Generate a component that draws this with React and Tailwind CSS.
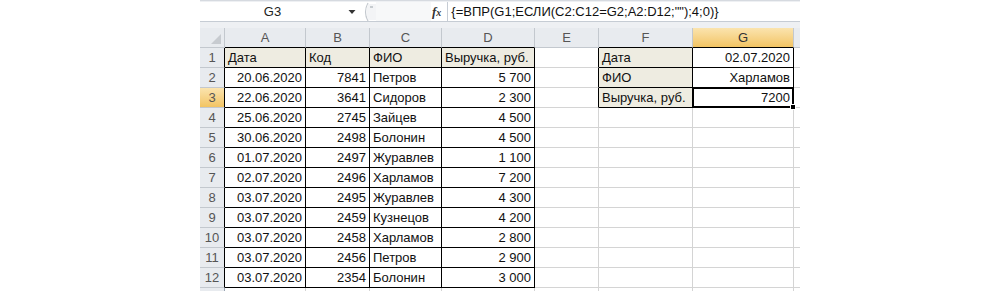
import React from 'react';

const cols = [
  { key: 'A', w: 'w-[81px]' },
  { key: 'B', w: 'w-[64px]' },
  { key: 'C', w: 'w-[72px]' },
  { key: 'D', w: 'w-[93px]' },
  { key: 'E', w: 'w-[64px]' },
  { key: 'F', w: 'w-[94px]' },
  { key: 'G', w: 'w-[101px]' },
];

const data = [
  ['20.06.2020', '7841', 'Петров', '5 700'],
  ['22.06.2020', '3641', 'Сидоров', '2 300'],
  ['25.06.2020', '2745', 'Зайцев', '4 500'],
  ['30.06.2020', '2498', 'Болонин', '4 500'],
  ['01.07.2020', '2497', 'Журавлев', '1 100'],
  ['02.07.2020', '2496', 'Харламов', '7 200'],
  ['03.07.2020', '2495', 'Журавлев', '4 300'],
  ['03.07.2020', '2459', 'Кузнецов', '4 200'],
  ['03.07.2020', '2458', 'Харламов', '2 800'],
  ['03.07.2020', '2456', 'Петров', '2 900'],
  ['03.07.2020', '2354', 'Болонин', '3 000'],
];

const lookup = [
  ['Дата', '02.07.2020'],
  ['ФИО', 'Харламов'],
  ['Выручка, руб.', '7200'],
];

// what goes in each cell: [text, align, beige]
const cellFor = (r, c) => {
  if (r === 1 && c < 4) return [['Дата', 'Код', 'ФИО', 'Выручка, руб.'][c], 'left', true];
  if (r >= 2 && r <= 12 && c < 4) return [data[r - 2][c], c === 2 ? 'left' : 'right', false];
  if (r <= 3 && c === 5) return [lookup[r - 1][0], 'left', true];
  if (r <= 3 && c === 6) return [lookup[r - 1][1], 'right', false];
  return ['', 'left', false];
};

const inTable = (r, c) => (c < 4 && r <= 12) || (c >= 5 && r <= 3);

const Cell = ({ r, c }) => {
  const [text, align, beige] = cellFor(r, c);
  const right = inTable(r, c) || (c === 4 && r <= 3) ? 'border-r-black' : 'border-r-[#d4d4d4]';
  const bottom = inTable(r, c) ? 'border-b-black' : 'border-b-[#d4d4d4]';
  const selected = r === 3 && c === 6;
  return (
    <div
      className={`${cols[c].w} h-full shrink-0 border-r border-b ${right} ${bottom} ${beige ? 'bg-[#eeece1]' : 'bg-white'} relative ${selected ? 'z-10' : ''} flex items-center px-[3px] text-[#111] ${align === 'right' ? 'justify-end' : 'justify-start'}`}
    >
      <span className="whitespace-nowrap leading-none">{text}</span>
      {selected && (
        <>
          <div className="absolute -left-[1px] -top-[1px] -right-[1px] -bottom-[1px] border-2 border-black" />
          <div className="absolute -right-[3px] -bottom-[3px] w-[6px] h-[6px] bg-black border border-white" />
        </>
      )}
    </div>
  );
};

const RowHead = ({ n, active }) => (
  <div
    className={`w-[25px] h-full shrink-0 border-b border-r ${n >= 1 && n <= 12 ? 'border-r-black' : 'border-r-[#9aa5b3]'} border-b-[#c3c8ce] flex items-center justify-center text-[#555] ${active ? 'bg-gradient-to-b from-[#fbe4ae] to-[#f2c462]' : 'bg-[#e8ebef]'}`}
  >
    {n <= 12 ? n : ''}
  </div>
);

export default function App() {
  return (
    <div className="w-[1000px] h-[291px] bg-white overflow-hidden" style={{ fontFamily: '"Liberation Sans", Arial, sans-serif' }}>
      <div className="ml-[200px] w-[600px] h-[291px] overflow-hidden text-[13px]">
        {/* formula bar */}
        <div className="h-[28px] bg-[#eef0f3] border-t border-[#d6dae0] pt-[1px]">
          <div className="h-[20px] bg-white border-b border-[#c6ccd4] flex items-center">
            <div className="w-[145px] flex justify-center text-[#222]">G3</div>
            <svg width="10" height="6" viewBox="0 0 10 6" className="ml-[2px]">
              <path d="M1.5 1 L8.5 1 L5 5 Z" fill="#333" />
            </svg>
            <svg width="14" height="20" viewBox="0 0 14 20" className="ml-[5px]">
              <path d="M6 1 Q1 10 6 19" stroke="#c4c9cf" strokeWidth="1.2" fill="none" />
              <path d="M6 2 Q3 10 6 18 L14 18 L14 2 Z" fill="#f3f4f6" />
              <path d="M8 5 L11 5" stroke="#aab0b8" strokeWidth="1.2" />
            </svg>
            <div className="w-[55px] h-full bg-[#f7f8f9]" />
            <span className="text-[13px] italic font-bold text-[#333] ml-[1px]" style={{ fontFamily: '"Liberation Serif", serif' }}>
              f<span className="text-[10px]">x</span>
            </span>
            <div className="w-px h-full bg-[#c6ccd4] ml-[6px]" />
            <span className="ml-[3px] text-[#111] whitespace-nowrap">{'{=ВПР(G1;ЕСЛИ(C2:C12=G2;A2:D12;"");4;0)}'}</span>
          </div>
        </div>

        {/* column headers */}
        <div className="flex h-[20px]">
          <div className="w-[25px] h-full shrink-0 bg-[#e8ebef] border-r border-b border-[#c3c8ce] relative">
            <svg width="10" height="10" viewBox="0 0 10 10" className="absolute right-[3px] bottom-[3px]">
              <path d="M10 0 L10 10 L0 10 Z" fill="#c7cbd0" />
            </svg>
          </div>
          {cols.map((col, c) => (
            <div
              key={col.key}
              className={`${col.w} h-full shrink-0 border-r border-b border-r-[#c3c8ce] ${c === 4 ? 'border-b-[#c3c8ce]' : 'border-b-black'} flex items-center justify-center ${c === 6 ? 'bg-gradient-to-b from-[#fbe4ae] to-[#f2c462] text-[#333]' : 'bg-[#e8ebef] text-[#555]'}`}
            >
              {col.key}
            </div>
          ))}
          <div className="flex-1 h-full bg-[#e8ebef] border-b border-[#c3c8ce]" />
        </div>

        {/* rows */}
        {Array.from({ length: 13 }, (_, i) => i + 1).map((r) => (
          <div key={r} className="flex h-[20px]">
            <RowHead n={r} active={r === 3} />
            {cols.map((col, c) => (
              <Cell key={col.key} r={r} c={c} />
            ))}
            <div className="flex-1 h-full bg-white border-b border-[#d4d4d4]" />
          </div>
        ))}
      </div>
    </div>
  );
}
